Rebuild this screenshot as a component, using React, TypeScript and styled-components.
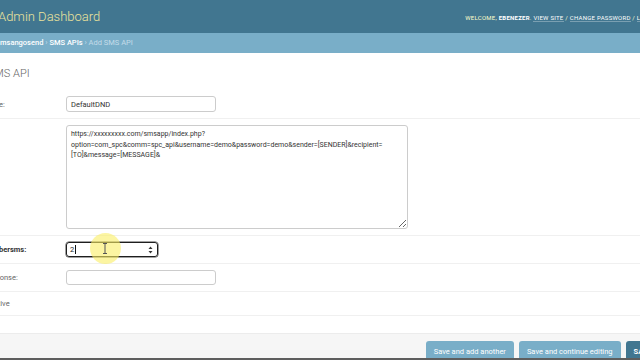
import React from "react";
import styled, { createGlobalStyle } from "styled-components";

const Global = createGlobalStyle`
  html, body { margin: 0; padding: 0; background: #fff; overflow: hidden; }
  body { font-family: Roboto, "Liberation Sans", sans-serif; }
  #root { width: 640px; height: 360px; overflow: hidden; position: relative; }
`;

const Page = styled.div`
  width: 740px;
  margin-left: -34px;
  height: 360px;
  display: flex;
  flex-direction: column;
`;

const Header = styled.header`
  height: 33px;
  flex-shrink: 0;
  background: #417690;
  display: flex;
  align-items: center;
  justify-content: space-between;
  padding: 0 43px 0 32px;
`;

const Brand = styled.div`
  font-size: 13px;
  font-weight: 300;
  color: #ece39c;
`;

const UserTools = styled.div`
  font-size: 6px;
  letter-spacing: 0.26px;
  color: #ffc;
  text-transform: uppercase;
  white-space: nowrap;
  padding-top: 2px;
`;

const UserName = styled.strong`
  font-weight: 700;
  color: #fff;
`;

const ToolLink = styled.span`
  color: #fff;
  border-bottom: 1px solid rgba(255, 255, 255, 0.3);
`;

const Breadcrumbs = styled.nav`
  height: 20px;
  flex-shrink: 0;
  background: #79aec8;
  padding-left: 34px;
  font-size: 7.5px;
  line-height: 20px;
  color: #c4dce8;
  white-space: nowrap;
`;

const Crumb = styled.span`
  color: #fff;
  font-weight: 500;
`;

const Title = styled.h1`
  margin: 14px 0 9px;
  font-size: 11px;
  line-height: 14px;
  font-weight: 300;
  color: #666;
`;

const Fieldset = styled.div`
  display: flex;
  flex-direction: column;
`;

const Row = styled.div`
  display: grid;
  grid-template-columns: 83px auto;
  align-items: center;
  padding: 6px 0 6px 17px;
  min-height: 11px;
  border-bottom: 1px solid #f0f0f0;
`;

const CheckRow = styled.div`
  display: flex;
  align-items: center;
  gap: 4px;
  padding: 6px 0 6px 10px;
  min-height: 11px;
  border-bottom: 1px solid #f0f0f0;
`;

const CheckBox = styled.span`
  width: 9px;
  height: 9px;
  box-sizing: border-box;
  border: 1px solid #999;
  border-radius: 2px;
  background: #fff;
`;

const Label = styled.label<{ $required?: boolean; $top?: boolean }>`
  font-size: 7.5px;
  color: ${(p) => (p.$required ? "#333" : "#666")};
  font-weight: ${(p) => (p.$required ? 700 : 400)};
  align-self: ${(p) => (p.$top ? "start" : "center")};
`;

const TextInput = styled.input<{ $h?: number }>`
  width: 150px;
  height: ${(p) => p.$h ?? 16}px;
  box-sizing: border-box;
  border: 1px solid #ccc;
  border-radius: 3px;
  padding: 0 4px;
  font-family: Roboto, "Liberation Sans", sans-serif;
  font-size: 7.5px;
  color: #333;
  background: #fff;
  outline: none;
`;

const TextArea = styled.textarea`
  width: 342px;
  height: 104px;
  box-sizing: border-box;
  border: 1px solid #ccc;
  border-radius: 3px;
  padding: 3px 4px;
  font-family: Roboto, "Liberation Sans", sans-serif;
  font-size: 7px;
  line-height: 10.5px;
  color: #333;
  background: #fff;
  outline: none;
  overflow: hidden;
`;

const NumberBox = styled.div`
  width: 92px;
  height: 15px;
  box-sizing: border-box;
  border: 1px solid #1e1e1e;
  box-shadow: 0 0 0 0.5px #444;
  border-radius: 3px;
  display: flex;
  align-items: center;
  justify-content: space-between;
  padding: 0 4px 0 3px;
  font-size: 7.5px;
  color: #222;
`;

const Value = styled.span`
  display: flex;
  align-items: center;
`;

const Caret = styled.span`
  display: inline-block;
  width: 1px;
  height: 9px;
  background: #111;
  margin-left: 0.5px;
`;

const SubmitRow = styled.div`
  margin-top: 17px;
  height: 25px;
  box-sizing: border-box;
  flex-shrink: 0;
  background: #f6f6f6;
  border-top: 1px solid #ececec;
  display: flex;
  justify-content: flex-end;
  align-items: flex-start;
  gap: 5px;
  padding: 7px 46px 0 0;
  overflow: hidden;
`;

const Button = styled.button<{ $primary?: boolean }>`
  height: 20px;
  border: none;
  border-radius: 3px;
  padding: 0 8px;
  background: ${(p) => (p.$primary ? "#417690" : "#79aec8")};
  color: #fff;
  font-family: Roboto, "Liberation Sans", sans-serif;
  font-size: 7.5px;
  font-weight: ${(p) => (p.$primary ? 700 : 400)};
  text-transform: ${(p) => (p.$primary ? "uppercase" : "none")};
  white-space: nowrap;
`;

const BottomBar = styled.div`
  height: 2px;
  flex-shrink: 0;
  background: #5e5e5e;
`;

const Highlight = styled.div`
  position: absolute;
  left: 90px;
  top: 233px;
  width: 31px;
  height: 31px;
  border-radius: 50%;
  background: rgba(250, 238, 100, 0.6);
  pointer-events: none;
`;

const Cursor = styled.svg`
  position: absolute;
  left: 102px;
  top: 243px;
  pointer-events: none;
`;

export default function App() {
  return (
    <>
      <Global />
      <Page>
        <Header>
          <Brand>Admin Dashboard</Brand>
          <UserTools>
            Welcome, <UserName>Ebenezer</UserName>. <ToolLink>View site</ToolLink> /{" "}
            <ToolLink>Change password</ToolLink> / <ToolLink>Log out</ToolLink>
          </UserTools>
        </Header>
        <Breadcrumbs>
          <Crumb>msangosend</Crumb> › <Crumb>SMS APIs</Crumb> › Add SMS API
        </Breadcrumbs>
        <Title>Add SMS API</Title>
        <Fieldset>
          <Row>
            <Label>Name:</Label>
            <TextInput readOnly value="DefaultDND" />
          </Row>
          <Row>
            <Label $top>Url:</Label>
            <TextArea
              readOnly
              value={
                "https://xxxxxxxxx.com/smsapp/index.php?\noption=com_spc&comm=spc_api&username=demo&password=demo&sender=[SENDER]&recipient=\n[TO]&message=[MESSAGE]&"
              }
            />
          </Row>
          <Row>
            <Label $required>Numbersms:</Label>
            <NumberBox>
              <Value>
                2<Caret />
              </Value>
              <svg width="5" height="8" viewBox="0 0 5 8">
                <path d="M2.5 0.5 L4.5 3 L0.5 3 Z" fill="#333" />
                <path d="M2.5 7.5 L4.5 5 L0.5 5 Z" fill="#333" />
              </svg>
            </NumberBox>
          </Row>
          <Row>
            <Label>Response:</Label>
            <TextInput readOnly value="" $h={15} />
          </Row>
          <CheckRow>
            <CheckBox />
            <Label>Active</Label>
          </CheckRow>
        </Fieldset>
        <SubmitRow>
          <Button>Save and add another</Button>
          <Button>Save and continue editing</Button>
          <Button $primary>Save</Button>
        </SubmitRow>
        <BottomBar />
      </Page>
      <Highlight />
      <Cursor width="6" height="11" viewBox="0 0 6 11">
        <path d="M1 0.5 H5 M3 0.5 V10.5 M1 10.5 H5" stroke="#555" strokeWidth="1" fill="none" />
      </Cursor>
    </>
  );
}
